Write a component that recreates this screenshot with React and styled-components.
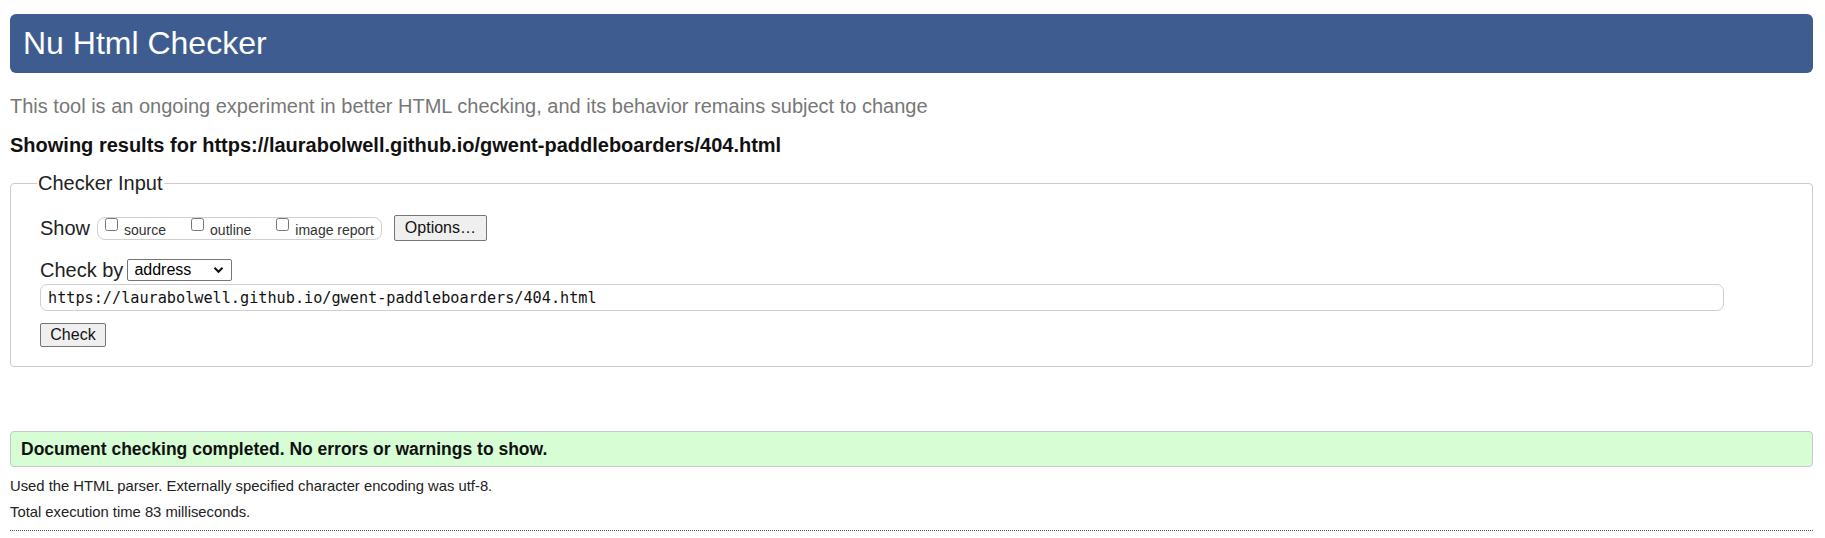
import React from "react";
import styled, { createGlobalStyle } from "styled-components";

const Global = createGlobalStyle`
  html, body { margin: 0; padding: 0; background: #fff; }
  body { font-family: "Liberation Sans", Arial, sans-serif; color: #000; }
`;

const Page = styled.div`
  padding: 14px 12px 0 10px;
  display: flex;
  flex-direction: column;
`;

const Title = styled.h1`
  margin: 0;
  height: 59px;
  box-sizing: border-box;
  display: flex;
  align-items: center;
  padding: 0 13px;
  background: #3e5c90;
  color: #fff;
  border-radius: 6px;
  font-size: 32px;
  font-weight: normal;
`;

const Intro = styled.p`
  margin: 22px 0 0 0;
  font-size: 20px;
  line-height: 23px;
  color: #777;
`;

const ResultsFor = styled.h2`
  margin: 16px 0 0 0;
  font-size: 20px;
  line-height: 23px;
  font-weight: bold;
  color: #111;
`;

const Fieldset = styled.fieldset`
  margin: 15px 0 0 0;
  padding: 20px 29px 19px 29px;
  border: 1px solid #cccccc;
  border-radius: 4px;
  display: flex;
  flex-direction: column;
  align-items: flex-start;
  min-width: 0;
`;

const Legend = styled.legend`
  padding: 0 1px;
  margin-left: -3px;
  font-size: 20px;
  line-height: 23px;
  color: #222;
`;

const Row = styled.div`
  display: flex;
  align-items: center;
  height: ${(p) => p.$h || 24}px;
  margin-top: ${(p) => p.$mt || 0}px;
`;

const FieldLabel = styled.span`
  font-size: 20px;
  color: #222;
`;

const OptionGroup = styled.div`
  display: flex;
  align-items: center;
  height: 23px;
  box-sizing: border-box;
  margin-left: 7px;
  padding: 0 7px 0 7px;
  border: 1px solid #d0d0d0;
  border-radius: 8px;
  gap: 25px;
`;

const CheckOption = styled.label`
  display: flex;
  align-items: center;
  align-self: stretch;
  font-size: 14px;
  color: #333;
  gap: 6px;
  padding-top: 4px;
`;

const Box = styled.input.attrs({ type: "checkbox" })`
  width: 13px;
  height: 13px;
  margin: 0;
  align-self: flex-start;
  margin-top: -4px;
`;

const Button = styled.button`
  font-family: "Liberation Sans", Arial, sans-serif;
  font-size: 16px;
  color: #111;
  background: #efefef;
  border: 1px solid #767676;
  border-radius: 2px;
  box-sizing: border-box;
  width: ${(p) => p.$w}px;
  height: ${(p) => p.$h}px;
  padding: 0;
  margin-left: ${(p) => p.$ml || 0}px;
`;

const Select = styled.div`
  display: flex;
  align-items: center;
  justify-content: space-between;
  box-sizing: border-box;
  width: 105px;
  height: 22px;
  margin-left: 4px;
  padding: 0 7px 0 6px;
  border: 1px solid #767676;
  border-radius: 2px;
  font-size: 16px;
  color: #000;
`;

const UrlInput = styled.div`
  box-sizing: border-box;
  height: 27px;
  margin-top: 3px;
  width: 1684px;
  border: 1px solid #cfcfcf;
  border-radius: 7px;
  display: flex;
  align-items: center;
  padding-left: 7px;
  font-family: "DejaVu Sans Mono", "Liberation Mono", monospace;
  font-size: 15.2px;
  color: #111;
`;

const Success = styled.div`
  margin-top: 64px;
  height: 36px;
  box-sizing: border-box;
  display: flex;
  align-items: center;
  padding-left: 10px;
  background: #d6fdd4;
  border: 1px solid #c8c8c8;
  border-radius: 4px;
  font-size: 17.5px;
  font-weight: bold;
  color: #111;
`;

const Note = styled.p`
  margin: ${(p) => p.$mt || 0}px 0 0 0;
  font-size: 14.8px;
  line-height: 17px;
  color: #222;
`;

const Rule = styled.hr`
  margin: 9px 0 0 0;
  border: 0;
  border-top: 1px dotted #555;
`;

function Chevron() {
  return (
    <svg width="11" height="8" viewBox="0 0 11 8">
      <path d="M1.5 1.8 L5.5 5.8 L9.5 1.8" fill="none" stroke="#111" strokeWidth="2" />
    </svg>
  );
}

export default function App() {
  return (
    <>
      <Global />
      <Page>
        <Title>Nu Html Checker</Title>
        <Intro>This tool is an ongoing experiment in better HTML checking, and its behavior remains subject to change</Intro>
        <ResultsFor>Showing results for https://laurabolwell.github.io/gwent-paddleboarders/404.html</ResultsFor>
        <Fieldset>
          <Legend>Checker Input</Legend>
          <Row $h={26}>
            <FieldLabel>Show</FieldLabel>
            <OptionGroup>
              <CheckOption><Box />source</CheckOption>
              <CheckOption><Box />outline</CheckOption>
              <CheckOption><Box />image report</CheckOption>
            </OptionGroup>
            <Button $ml={12} $w={93} $h={26}>Options…</Button>
          </Row>
          <Row $h={22} $mt={18}>
            <FieldLabel>Check by</FieldLabel>
            <Select>address<Chevron /></Select>
          </Row>
          <UrlInput>https://laurabolwell.github.io/gwent-paddleboarders/404.html</UrlInput>
          <Row $h={24} $mt={12}>
            <Button $w={66} $h={24}>Check</Button>
          </Row>
        </Fieldset>
        <Success>Document checking completed. No errors or warnings to show.</Success>
        <Note $mt={11}>Used the HTML parser. Externally specified character encoding was utf-8.</Note>
        <Note $mt={9}>Total execution time 83 milliseconds.</Note>
        <Rule />
      </Page>
    </>
  );
}
